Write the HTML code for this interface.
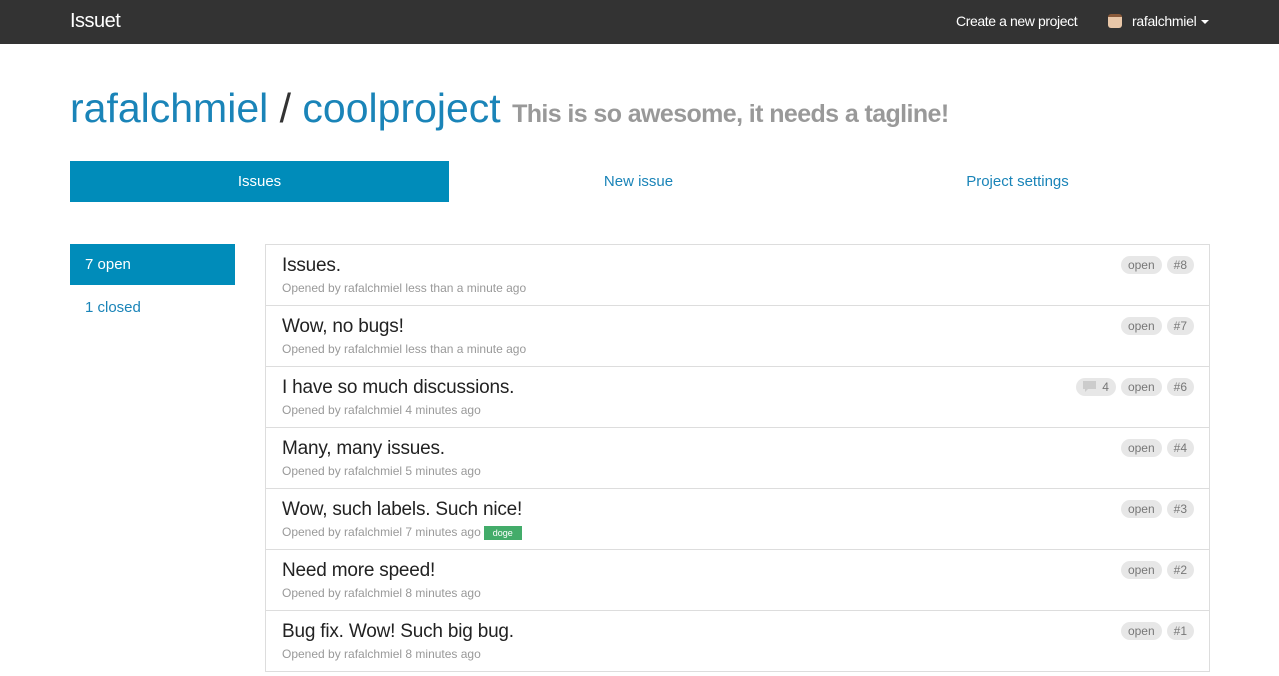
<!DOCTYPE html><html><head><style>
body{margin:0;font-family:"Liberation Sans",sans-serif;background:#fff;width:1279px;height:676px;overflow:hidden}
.nav{height:44px;background:#333;position:relative;color:#fff}
.brand{position:absolute;left:70px;top:10px;font-size:20px;letter-spacing:-0.5px}
.cp{position:absolute;left:956px;top:13px;font-size:14px;letter-spacing:-0.4px}
.user{position:absolute;left:1108px;top:13px;font-size:14px;letter-spacing:-0.3px}
.av{display:inline-block;width:14px;height:14px;background:#e9c7a8;border-radius:3px;border-top:3px solid #8a5a3a;box-sizing:border-box;vertical-align:-2px;margin-right:10px}
.caret{display:inline-block;border-left:4px solid transparent;border-right:4px solid transparent;border-top:4px solid #fff;margin-left:5px;vertical-align:2px}
h1{position:absolute;left:70px;top:85px;margin:0;font-weight:normal;font-size:41px;color:#1a84b8;letter-spacing:0}
h1 .s{color:#333}
h1 small{font-size:25px;color:#999;font-weight:bold;letter-spacing:-0.6px}
.tabs{position:absolute;left:70px;top:161px;width:1140px;height:41px;display:flex}
.tabs div{width:379px;text-align:center;line-height:41px;font-size:15px;color:#1a84b8}
.tabs .a{background:#008cba;color:#fff}
.side{position:absolute;left:70px;top:244px;width:165px}
.side div{height:41px;line-height:42px;padding-left:15px;font-size:15px;color:#1a84b8}
.side .a{background:#008cba;color:#fff;margin-bottom:2px}
.list{position:absolute;left:265px;top:244px;width:943px;border:1px solid #ddd}
.row{height:60px;border-top:1px solid #ddd;position:relative}
.row:first-child{border-top:none}
.t{position:absolute;left:16px;top:10px;font-size:19px;color:#222;letter-spacing:-0.2px}
.m{position:absolute;left:16px;top:36px;font-size:12px;color:#999;letter-spacing:0}
.lbl{background:#43ac6a;color:#fff;font-size:9px;padding:2px 9px;margin-left:3px}
.b{position:absolute;top:11px;right:15px;display:flex;gap:5px}
.b span{background:#e7e7e7;color:#777;font-size:12px;height:18px;line-height:18px;padding:0 7px;border-radius:9px}
</style></head><body>
<div class="nav"><div class="brand">Issuet</div><div class="cp">Create a new project</div><div class="user"><span class="av"></span>rafalchmiel<span class="caret"></span></div></div>
<h1>rafalchmiel <span class="s">/</span> coolproject <small>This is so awesome, it needs a tagline!</small></h1>
<div class="tabs"><div class="a">Issues</div><div>New issue</div><div>Project settings</div></div>
<div class="side"><div class="a">7 open</div><div>1 closed</div></div>
<div class="list">
<div class="row"><div class="t">Issues.</div><div class="m">Opened by rafalchmiel less than a minute ago</div><div class="b"><span>open</span><span>#8</span></div></div>
<div class="row"><div class="t">Wow, no bugs!</div><div class="m">Opened by rafalchmiel less than a minute ago</div><div class="b"><span>open</span><span>#7</span></div></div>
<div class="row"><div class="t">I have so much discussions.</div><div class="m">Opened by rafalchmiel 4 minutes ago</div><div class="b"><span><svg width="13" height="11" viewBox="0 0 13 11" style="vertical-align:-1px;margin-right:6px"><path d="M0 0h13v8H5l-3 3V8H0z" fill="#ccc"/></svg>4</span><span>open</span><span>#6</span></div></div>
<div class="row"><div class="t">Many, many issues.</div><div class="m">Opened by rafalchmiel 5 minutes ago</div><div class="b"><span>open</span><span>#4</span></div></div>
<div class="row"><div class="t">Wow, such labels. Such nice!</div><div class="m">Opened by rafalchmiel 7 minutes ago<span class="lbl">doge</span></div><div class="b"><span>open</span><span>#3</span></div></div>
<div class="row"><div class="t">Need more speed!</div><div class="m">Opened by rafalchmiel 8 minutes ago</div><div class="b"><span>open</span><span>#2</span></div></div>
<div class="row"><div class="t">Bug fix. Wow! Such big bug.</div><div class="m">Opened by rafalchmiel 8 minutes ago</div><div class="b"><span>open</span><span>#1</span></div></div>
</div>
</body></html>
